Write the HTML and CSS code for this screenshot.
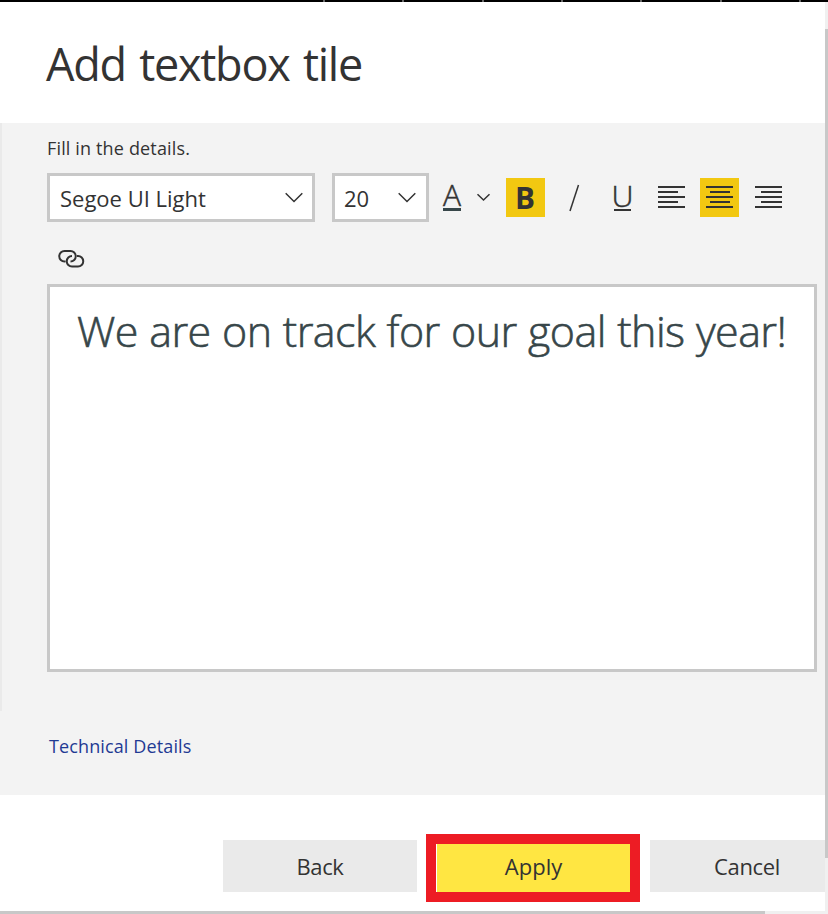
FILE: index.html
```html
<!DOCTYPE html>
<html lang="en">
<head>
<meta charset="utf-8">
<title>Add textbox tile</title>
<link rel="stylesheet" href="styles.css">
</head>
<body>
<div class="topbar"></div>
<div class="viewport">
  <main class="pane">
    <header class="header"><h1 class="title">Add textbox tile</h1></header>
    <section class="body">
      <p class="hint">Fill in the details.</p>
      <div class="toolbar">
        <div class="select font"><span class="font-name">Segoe UI Light</span>
          <svg width="18" height="10" viewBox="0 0 18 10"><path d="M.7 .2 9 8.500 17.300 .2"/></svg></div>
        <div class="select size"><span>20</span>
          <svg width="18" height="10" viewBox="0 0 18 10"><path d="M.7 .2 9 8.500 17.300 .2"/></svg></div>
        <svg class="color" width="49" height="39"><text class="light" x="0" y="28" font-size="29" textLength="18" lengthAdjust="spacingAndGlyphs">A</text><rect x="0" y="30" width="18" height="3"/><path d="M34.500 16.200 40.500 22 46.500 16.200"/></svg>
        <div class="tools">
          <svg class="tool on" viewBox="0 0 39 39"><text class="bold" x="9" y="31" font-size="30" textLength="20" lengthAdjust="spacingAndGlyphs">B</text></svg>
          <svg class="tool" viewBox="0 0 39 39"><path d="M15 33 23.500 7"/></svg>
          <svg class="tool" viewBox="0 0 39 39"><text class="light" x="8.500" y="29" font-size="30" textLength="22" lengthAdjust="spacingAndGlyphs">U</text><rect x="11" y="31" width="17" height="2"/></svg>
          <svg class="tool" viewBox="0 0 39 39"><path class="bars" d="M6 9h27M6 14h20M6 19h27M6 24h20M6 29h27"/></svg>
          <svg class="tool on" viewBox="0 0 39 39"><path class="bars" d="M6 9h27M10 14h20M6 19h27M10 24h20M6 29h27"/></svg>
          <svg class="tool" viewBox="0 0 39 39"><path class="bars" d="M6 9h27M12 14h21M6 19h27M12 24h21M6 29h27"/></svg>
        </div>
      </div>
      <svg class="link" width="28" height="19" viewBox="0 0 28 19"><path d="M7.500 12.500H6.500A5.250 5.250 0 0 1 6.500 2H12.500A5.250 5.250 0 0 1 12.500 12.500M19 7H20A5.250 5.250 0 0 1 20 17.500H14A5.250 5.250 0 0 1 14 7"/></svg>
      <div class="editor"><span class="message">We are on track for our goal this year!</span></div>
      <a class="details">Technical Details</a>
    </section>
    <footer class="footer">
      <button class="btn">Back</button>
      <div class="marker"><button class="btn primary">Apply</button></div>
      <button class="btn">Cancel</button>
    </footer>
  </main>
  <div class="vscroll"><div class="vthumb"></div></div>
</div>
<div class="hscroll"><div class="hthumb"></div></div>
</body>
</html>
```
FILE: styles.css
```css
* { box-sizing: border-box; }
body { margin: 0; width: 828px; height: 914px; overflow: hidden; background: #fff; color: #333; font-family: "Open Sans", "Noto Sans", sans-serif; }
.topbar { height: 2px; background: linear-gradient(90deg, #000 323px, transparent 323px), repeating-linear-gradient(90deg, #666 0 2px, #000 2px 79.300px) 323px 0 / 505px 2px no-repeat; }
.viewport { display: flex; height: 909px; }
.pane { width: 825px; overflow: hidden; }
.header { height: 121px; padding: 3px 0 0 46px; display: flex; align-items: center; }
.title { margin: 0; font-size: 45px; font-weight: 400; line-height: 60px; white-space: nowrap; letter-spacing: -1.25px; word-spacing: 3px; }
.body { height: 672px; padding: 12px 8px 0 47px; background: linear-gradient(#eaeaea, #eaeaea) 0 0 / 2px 588px no-repeat #f3f3f3; }
.hint { margin: 0; height: 38px; font-size: 18px; line-height: 26px; white-space: nowrap; letter-spacing: .15px; }
.toolbar { display: flex; height: 49px; }
.select { display: flex; justify-content: space-between; align-items: center; height: 49px; padding: 0 10px; border: 3px solid #c8c8c8; background: #fff; font-size: 22px; line-height: 30px; white-space: nowrap; }
.font { width: 268px; margin-right: 17px; padding-right: 9px; }
.size { width: 97px; margin-right: 14px; padding-left: 9px; }
svg { display: block; overflow: visible; fill: none; stroke: #333; stroke-width: 1.500; }
svg text, svg rect { fill: #333; stroke: none; }
svg .light { font-weight: 300; stroke: #333; stroke-width: .5; }
.bold { font-weight: 700; }
.color { margin: 5px 14px 0 0; }
.color rect { fill: #374649; }
.tools { display: flex; gap: 9.500px; margin-top: 5px; }
.tool { width: 39px; height: 39px; flex: none; }
.on { background: #f2c811; }
.bars { stroke-width: 2; }
.link { margin: 27px 0 16px 11px; stroke-width: 2; }
.editor { width: 770px; height: 388px; padding: 14px 0 0 27px; border: 3px solid #c8c8c8; background: #fff; }
.message { display: block; font-size: 43px; font-weight: 300; line-height: 60px; color: #374649; white-space: nowrap; letter-spacing: -.55px; word-spacing: .7px; -webkit-text-stroke: .6px #374649; }
.details { display: block; margin: 61px 0 0 2px; font-size: 18px; line-height: 26px; color: #1f3a93; white-space: nowrap; letter-spacing: .12px; }
.footer { display: flex; height: 116px; padding: 39px 0 0 223px; }
.btn { flex: none; width: 194px; height: 52px; margin-top: 6px; padding: 0; border: 0; background: #eaeaea; color: #333; font: 22px/52px "Open Sans", sans-serif; letter-spacing: -.35px; }
.marker { flex: none; width: 214px; height: 68px; margin: 0 10px 0 9px; border: 10px solid #ed1c24; padding-left: 1px; }
.primary { display: block; width: 193px; height: 48px; margin: 0; padding-bottom: 4px; background: #ffe642; line-height: 44px; letter-spacing: 0; }
.vscroll { width: 3px; padding-top: 27px; background: #f0f0f0; }
.vthumb { height: 829px; background: #c8c8c8; }
.hscroll { height: 3px; background: #f0f0f0; }
.hthumb { width: 765px; height: 3px; background: #c8c8c8; }
```
